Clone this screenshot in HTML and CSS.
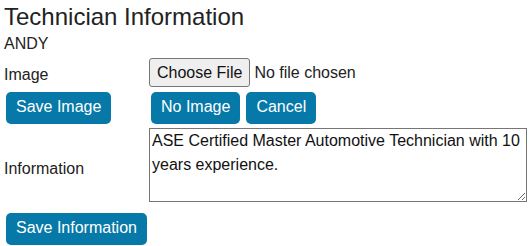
FILE: index.html
```html
<!DOCTYPE html>
<html lang="en">
<head>
<meta charset="utf-8">
<title>Technician Information</title>
<link rel="stylesheet" href="styles.css">
</head>
<body>
<div class="page">
  <h1 class="title">Technician Information</h1>
  <div class="name">ANDY</div>
  <div class="form">
    <div class="label">Image</div>
    <div class="field"><input class="file" type="file"></div>

    <div class="field"><button class="btn" type="button">Save Image</button></div>
    <div class="field btns"><button class="btn" type="button">No Image</button><button class="btn" type="button">Cancel</button></div>

    <div class="label">Information</div>
    <div class="field info"><textarea class="text">ASE Certified Master Automotive Technician with 10 years experience.</textarea></div>

    <div class="field"><button class="btn" type="button">Save Information</button></div>
    <div class="field"></div>
  </div>
</div>
</body>
</html>
```
FILE: styles.css
```css
html, body {
  margin: 0;
  padding: 0;
  background: #ffffff;
}
body {
  font-family: "Liberation Sans", Arial, sans-serif;
  font-size: 16px;
  line-height: 20px;
  color: #222222;
}
.page {
  padding: 3px 4px 0 4px;
}
.title {
  margin: 0;
  font-size: 24px;
  line-height: 28px;
  font-weight: normal;
  color: #222222;
}
.name {
  margin-top: 3px;
}
.form {
  margin-top: 4px;
  display: grid;
  grid-template-columns: 145px 378px;
  row-gap: 0;
}
.label {
  align-self: center;
}
.field {
  display: flex;
}
.btns {
  gap: 4px;
}
.file {
  display: block;
  font-family: "Liberation Sans", Arial, sans-serif;
  font-size: 16px;
  color: #222222;
  margin: 0 0 5px 0;
  padding: 0;
}
.file::file-selector-button {
  font-family: "Liberation Sans", Arial, sans-serif;
  font-size: 16px;
  line-height: 19px;
  color: #111111;
  background: #efefef;
  border: 1px solid #767676;
  border-radius: 3px;
  padding: 4px 7px;
  margin: 0 4px 0 0;
}
.btn {
  font-family: "Liberation Sans", Arial, sans-serif;
  font-size: 16px;
  line-height: 20px;
  color: #ffffff;
  background: #0679a8;
  border: 0;
  border-radius: 5px;
  padding: 5px 10px 7px 10px;
  margin: 0 0 0 2px;
  cursor: pointer;
}
.info {
  padding: 4px 0 11px 0;
}
.text {
  display: block;
  box-sizing: border-box;
  width: 378px;
  height: 74px;
  margin: 0;
  padding: 0 2px;
  border: 1px solid #767676;
  border-radius: 0;
  font-family: "Liberation Sans", Arial, sans-serif;
  font-size: 16px;
  line-height: 24px;
  color: #111111;
  background: #ffffff;
}
```
